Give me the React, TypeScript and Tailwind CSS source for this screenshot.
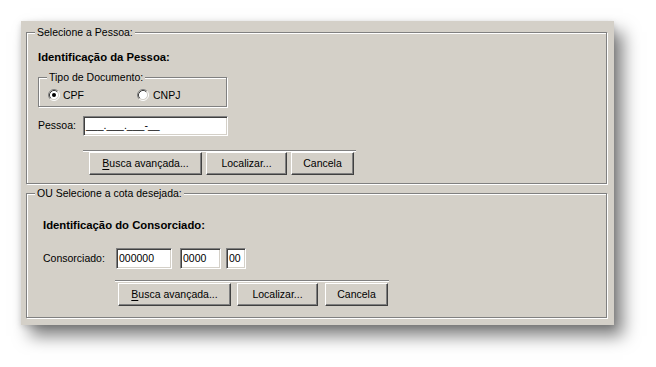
import React from "react";

const etched = "border border-[#808080] shadow-[inset_1px_1px_0_#fff,1px_1px_0_#fff]";

function Legend({ children }: { children: React.ReactNode }) {
  return (
    <span className="absolute -top-[8px] left-[8px] bg-[#d4d0c8] px-[2px] leading-[14px]">
      {children}
    </span>
  );
}

function Radio({ checked }: { checked?: boolean }) {
  return (
    <svg width="12" height="12" viewBox="0 0 12 12" className="shrink-0">
      <circle cx="6" cy="6" r="4.5" fill="#fff" />
      <path d="M2.11 9.89A5.5 5.5 0 0 1 9.89 2.11" fill="none" stroke="#808080" />
      <path d="M9.89 2.11A5.5 5.5 0 0 1 2.11 9.89" fill="none" stroke="#fff" />
      <path d="M2.82 9.18A4.5 4.5 0 0 1 9.18 2.82" fill="none" stroke="#404040" />
      <path d="M9.18 2.82A4.5 4.5 0 0 1 2.82 9.18" fill="none" stroke="#d4d0c8" />
      {checked && <circle cx="6" cy="6" r="2" fill="#000" />}
    </svg>
  );
}

function Field({ value, className }: { value: string; className: string }) {
  return (
    <div
      className={`flex items-center bg-white pl-[2px] border border-t-[#808080] border-l-[#808080] border-r-white border-b-white shadow-[inset_1px_1px_0_#404040,inset_-1px_-1px_0_#d4d0c8] ${className}`}
    >
      {value}
    </div>
  );
}

function Btn({ children, className }: { children: React.ReactNode; className: string }) {
  return (
    <button
      className={`h-[23px] flex items-center justify-center bg-[#d4d0c8] border border-t-white border-l-white border-r-[#404040] border-b-[#404040] shadow-[inset_-1px_-1px_0_#808080] ${className}`}
    >
      {children}
    </button>
  );
}

function Separator({ className }: { className: string }) {
  return <div className={`h-[2px] border-t border-t-[#808080] border-b border-b-white ${className}`} />;
}

function Buttons({ gaps }: { gaps: [string, string] }) {
  return (
    <div className="flex">
      <Btn className="w-[113px]">
        <span>
          <span className="underline underline-offset-[2px]">B</span>usca avançada...
        </span>
      </Btn>
      <Btn className={`w-[81px] ${gaps[0]}`}>Localizar...</Btn>
      <Btn className={`w-[63px] ${gaps[1]}`}>Cancela</Btn>
    </div>
  );
}

export default function App() {
  return (
    <div className="min-h-[367px] w-[656px] bg-white pt-[21px] pl-[21px] font-['Liberation_Sans',Arial,sans-serif] text-[10.5px] text-black">
      <div className="w-[593px] h-[304px] bg-[#d4d0c8] pt-[11px] pl-[5px] shadow-[9px_11px_16px_rgba(0,0,0,0.5),0_2px_6px_rgba(0,0,0,0.15)]">
        {/* pessoa */}
        <div className={`relative w-[581px] h-[152px] pt-[17px] pl-[11px] ${etched}`}>
          <Legend>Selecione a Pessoa:</Legend>
          <div className="font-bold text-[11.3px] leading-[14px]">Identificação da Pessoa:</div>

          <div className={`relative mt-[13px] w-[189px] h-[30px] pl-[9px] pt-[10px] ${etched}`}>
            <Legend>Tipo de Documento:</Legend>
            <div className="flex items-center leading-[14px]">
              <div className="flex items-center gap-[3px] w-[89px]">
                <Radio checked />
                <span>CPF</span>
              </div>
              <div className="flex items-center gap-[4px]">
                <Radio />
                <span>CNPJ</span>
              </div>
            </div>
          </div>

          <div className="mt-[9px] flex items-center">
            <span className="w-[45px]">Pessoa:</span>
            <Field value="___.___.___-__" className="w-[145px] h-[20px]" />
          </div>

          <Separator className="mt-[14px] ml-[45px] w-[273px]" />
          <div className="ml-[51px]">
            <Buttons gaps={["ml-[4px]", "ml-[4px]"]} />
          </div>
        </div>

        {/* cota */}
        <div className={`relative mt-[9px] w-[581px] h-[125px] pt-[24px] pl-[16px] ${etched}`}>
          <Legend>OU Selecione a cota desejada:</Legend>
          <div className="font-bold text-[11.3px] leading-[14px]">Identificação do Consorciado:</div>

          <div className="mt-[16px] flex items-center">
            <span className="w-[73px]">Consorciado:</span>
            <Field value="000000" className="w-[56px] h-[21px]" />
            <Field value="0000" className="ml-[8px] w-[41px] h-[21px]" />
            <Field value="00" className="ml-[5px] w-[20px] h-[21px]" />
          </div>

          <Separator className="mt-[11px] ml-[72px] w-[274px]" />
          <div className="ml-[75px] mt-[1px]">
            <Buttons gaps={["ml-[6px]", "ml-[7px]"]} />
          </div>
        </div>
      </div>
    </div>
  );
}
